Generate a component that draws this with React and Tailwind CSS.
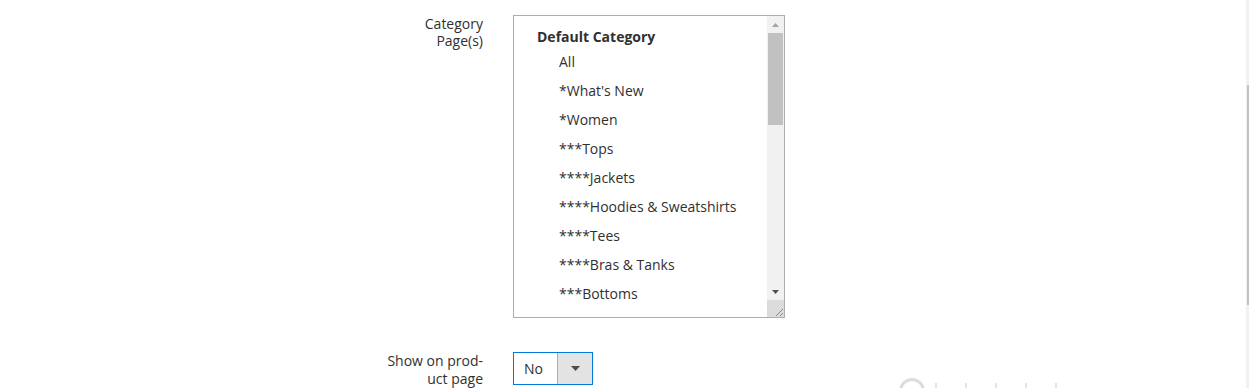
const categories = [
  "All",
  "*What's New",
  "*Women",
  "***Tops",
  "****Jackets",
  "****Hoodies & Sweatshirts",
  "****Tees",
  "****Bras & Tanks",
  "***Bottoms",
  "****Pants",
];

function CategoryList() {
  return (
    <div className="flex w-[272px] h-[303px] border border-[#adadad] bg-white">
      {/* options */}
      <div className="flex-1 overflow-hidden pt-[11px] pl-[23px]">
        <div className="h-[20px] leading-[20px] font-bold text-[#303030]">Default Category</div>
        {categories.map((c) => (
          <div key={c} className="h-[29px] leading-[29px] pl-[22px] text-[#303030] whitespace-nowrap">
            {c}
          </div>
        ))}
      </div>

      {/* scrollbar */}
      <div className="w-[17px] flex flex-col bg-[#f1f1f1]">
        <div className="h-[17px] flex items-center justify-center">
          <svg width="7" height="4" viewBox="0 0 7 4"><path d="M3.5 0L7 4H0z" fill="#a3a3a3" /></svg>
        </div>
        <div className="h-[92px] mx-[1px] bg-[#c1c1c1]" />
        <div className="flex-1" />
        <div className="h-[17px] flex items-center justify-center">
          <svg width="7" height="4" viewBox="0 0 7 4"><path d="M0 0H7L3.5 4z" fill="#505050" /></svg>
        </div>
        <div className="h-[17px] bg-[#dcdcdc] flex items-end justify-end">
          <svg width="12" height="12" viewBox="0 0 12 12">
            <path d="M11 4L4 11M11 8L8 11" stroke="#8a8a8a" strokeWidth="1" />
          </svg>
        </div>
      </div>
    </div>
  );
}

function YesNoSelect() {
  return (
    <div className="flex w-[80px] h-[33px] border border-[#007bdb] bg-white">
      <div className="flex-1 pl-[10px] leading-[31px] text-[#303030]">No</div>
      <div className="w-[35px] bg-[#e3e3e3] border-l border-[#adadad] flex items-center justify-center">
        <svg width="9" height="5" viewBox="0 0 9 5"><path d="M0 0H9L4.5 5z" fill="#514943" /></svg>
      </div>
    </div>
  );
}

export default function App() {
  return (
    <div
      className="relative flex w-[1249px] h-[388px] overflow-hidden bg-white text-[14px]"
      style={{ fontFamily: '"Open Sans", "Liberation Sans", sans-serif' }}
    >
      <div className="flex-1 pt-[15px]">
        {/* Category page(s) */}
        <div className="flex">
          <div className="w-[483px] text-right leading-[17px] text-[#303030]">
            Category
            <br />
            Page(s)
          </div>
          <div className="ml-[30px]">
            <CategoryList />
          </div>
        </div>

        {/* Show on product page */}
        <div className="flex mt-[34px]">
          <div className="w-[483px] text-right leading-[18px] text-[#303030]">
            Show on prod-
            <br />
            uct page
          </div>
          <div className="ml-[30px]">
            <YesNoSelect />
          </div>
        </div>
      </div>

      {/* page scrollbar */}
      <div className="w-[3px] bg-[#f1f1f1] flex flex-col items-end">
        <div className="mt-[85px] h-[220px] w-[2px] bg-[#c1c1c1]" />
      </div>

      {/* loading spinner peeking in at the bottom */}
      <div className="absolute left-[899px] top-[378px] w-[26px] h-[26px] rounded-full border-[3px] border-[#dcdcdc]" />
      <div className="absolute left-[935px] top-[383px] flex gap-[28px]">
        <div className="w-[2px] h-[5px] bg-[#e4e4e4]" />
        <div className="w-[2px] h-[5px] bg-[#e4e4e4]" />
        <div className="w-[2px] h-[5px] bg-[#e4e4e4]" />
        <div className="w-[2px] h-[5px] bg-[#e4e4e4]" />
        <div className="w-[2px] h-[5px] bg-[#e4e4e4]" />
      </div>
    </div>
  );
}
